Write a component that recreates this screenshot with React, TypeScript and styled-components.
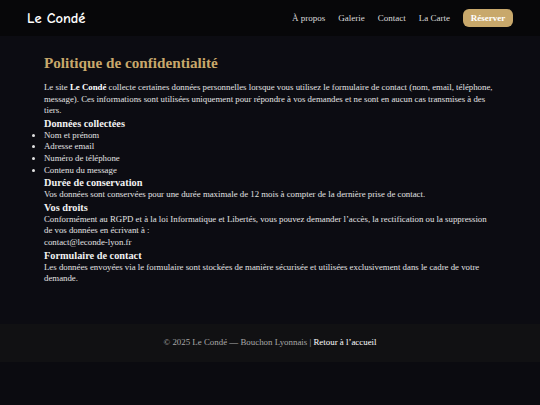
import { createGlobalStyle, styled } from 'styled-components';

const GOLD = '#c8a86b';

const GlobalStyle = createGlobalStyle`
  * {
    box-sizing: border-box;
  }
  html,
  body {
    margin: 0;
    padding: 0;
    background: #0b0b10;
  }
  body {
    font-family: 'Liberation Serif', 'Times New Roman', serif;
    color: #e2e2e2;
  }
`;

const NAV_LINKS = ['À propos', 'Galerie', 'Contact', 'La Carte'];

const COLLECTED = [
  'Nom et prénom',
  'Adresse email',
  'Numéro de téléphone',
  'Contenu du message',
];

const App = () => {
  return (
    <>
      <GlobalStyle />
      <Page>
        <Header>
          <Logo>Le Condé</Logo>
          <Nav>
            {NAV_LINKS.map((link) => (
              <NavLink key={link} href="#">
                {link}
              </NavLink>
            ))}
            <ReserveBtn href="#">Réserver</ReserveBtn>
          </Nav>
        </Header>

        <Main>
          <Title>Politique de confidentialité</Title>
          <Text>
            Le site <strong>Le Condé</strong> collecte certaines données
            personnelles lorsque vous utilisez le formulaire de contact (nom,
            email, téléphone, message). Ces informations sont utilisées
            uniquement pour répondre à vos demandes et ne sont en aucun cas
            transmises à des tiers.
          </Text>

          <SectionTitle>Données collectées</SectionTitle>
          <List>
            {COLLECTED.map((item) => (
              <li key={item}>{item}</li>
            ))}
          </List>

          <SectionTitle>Durée de conservation</SectionTitle>
          <Text>
            Vos données sont conservées pour une durée maximale de 12 mois à
            compter de la dernière prise de contact.
          </Text>

          <SectionTitle>Vos droits</SectionTitle>
          <Text>
            Conformément au RGPD et à la loi Informatique et Libertés, vous
            pouvez demander l’accès, la rectification ou la suppression de vos
            données en écrivant à :
            <br />
            contact@leconde-lyon.fr
          </Text>

          <SectionTitle>Formulaire de contact</SectionTitle>
          <Text>
            Les données envoyées via le formulaire sont stockées de manière
            sécurisée et utilisées exclusivement dans le cadre de votre demande.
          </Text>
        </Main>

        <Footer>
          © 2025 Le Condé — Bouchon Lyonnais |{' '}
          <FooterLink href="#">Retour à l’accueil</FooterLink>
        </Footer>
      </Page>
    </>
  );
};

const Page = styled.div`
  min-height: 405px;
  display: flex;
  flex-direction: column;
`;

const Header = styled.header`
  display: flex;
  align-items: center;
  justify-content: space-between;
  height: 36px;
  padding: 0 27px;
  background: #070709;
`;

const Logo = styled.div`
  font-family: 'Comic Sans MS', 'Comic Neue', cursive;
  font-weight: 700;
  font-size: 14.5px;
  color: #ffffff;
`;

const Nav = styled.nav`
  display: flex;
  align-items: center;
  gap: 13px;
`;

const NavLink = styled.a`
  font-size: 9px;
  color: #dcdcdc;
  text-decoration: none;
`;

const ReserveBtn = styled.a`
  display: inline-flex;
  align-items: center;
  justify-content: center;
  width: 50px;
  height: 18px;
  border-radius: 6px;
  background: ${GOLD};
  color: #ffffff;
  font-weight: 700;
  font-size: 9px;
  text-decoration: none;
`;

const Main = styled.main`
  padding: 17px 44px 39px;
  background: #0c0c12;
`;

const Title = styled.h1`
  margin: 0 0 10px;
  font-size: 15.2px;
  line-height: 19px;
  font-weight: 700;
  color: ${GOLD};
`;

const SectionTitle = styled.h2`
  margin: 0;
  font-size: 10.3px;
  line-height: 13px;
  font-weight: 700;
  color: #f2f2f2;
`;

const Text = styled.p`
  margin: 0;
  font-size: 8.8px;
  line-height: 11.6px;
  color: #e2e2e2;

  strong {
    color: #ffffff;
  }
`;

const List = styled.ul`
  margin: 0;
  padding: 0;
  font-size: 8.8px;
  line-height: 11.6px;
  color: #e2e2e2;

  li {
    list-style: disc outside;
  }
`;

const Footer = styled.footer`
  padding: 13px 0 14px;
  margin-bottom: 43px;
  background: #111113;
  text-align: center;
  font-size: 8.9px;
  line-height: 11px;
  color: #a8a8a8;
`;

const FooterLink = styled.a`
  color: #ffffff;
  text-decoration: none;
`;

export default App;
